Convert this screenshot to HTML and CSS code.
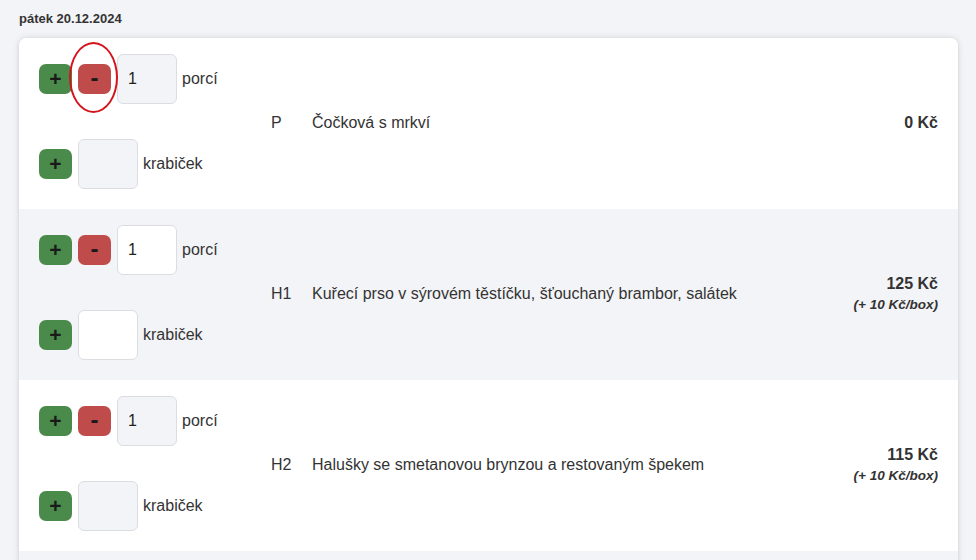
FILE: index.html
```html
<!DOCTYPE html>
<html lang="cs">
<head>
<meta charset="utf-8">
<link rel="stylesheet" href="styles.css">
</head>
<body>
<div class="day">pátek 20.12.2024</div>
<div class="card">
  <div class="row">
    <div class="controls">
      <div class="line">
        <button class="btn plus">+</button>
        <span class="minus-wrap">
          <button class="btn minus">-</button>
          <span class="mark"></span>
        </span>
        <input class="qty" type="text" value="1">
        <span class="unit">porcí</span>
      </div>
      <div class="line">
        <button class="btn plus">+</button>
        <input class="qty" type="text" value="">
        <span class="unit">krabiček</span>
      </div>
    </div>
    <div class="code">P</div>
    <div class="name">Čočková s mrkví</div>
    <div class="price"><div class="amount">0 Kč</div></div>
  </div>
  <div class="row alt">
    <div class="controls">
      <div class="line">
        <button class="btn plus">+</button>
        <button class="btn minus">-</button>
        <input class="qty" type="text" value="1">
        <span class="unit">porcí</span>
      </div>
      <div class="line">
        <button class="btn plus">+</button>
        <input class="qty" type="text" value="">
        <span class="unit">krabiček</span>
      </div>
    </div>
    <div class="code">H1</div>
    <div class="name">Kuřecí prso v sýrovém těstíčku, šťouchaný brambor, salátek</div>
    <div class="price"><div class="amount">125 Kč</div><div class="box">(+ 10 Kč/box)</div></div>
  </div>
  <div class="row">
    <div class="controls">
      <div class="line">
        <button class="btn plus">+</button>
        <button class="btn minus">-</button>
        <input class="qty" type="text" value="1">
        <span class="unit">porcí</span>
      </div>
      <div class="line">
        <button class="btn plus">+</button>
        <input class="qty" type="text" value="">
        <span class="unit">krabiček</span>
      </div>
    </div>
    <div class="code">H2</div>
    <div class="name">Halušky se smetanovou brynzou a restovaným špekem</div>
    <div class="price"><div class="amount">115 Kč</div><div class="box">(+ 10 Kč/box)</div></div>
  </div>
  <div class="row alt filler"></div>
</div>
</body>
</html>
```

FILE: styles.css
```css
html, body {
  margin: 0;
  padding: 0;
}
body {
  background: #f3f4f7;
  font-family: "Liberation Sans", Arial, sans-serif;
  color: #333;
  padding: 0 18px 0 19px;
  height: 560px;
  overflow: hidden;
}
.day {
  font-size: 13px;
  font-weight: bold;
  line-height: 16px;
  padding-top: 11px;
  margin-bottom: 11px;
  color: #333;
}
.card {
  background: #fff;
  border-radius: 8px;
  box-shadow: 0 0 7px rgba(0, 0, 0, 0.13), 0 1px 3px rgba(0, 0, 0, 0.06);
  overflow: hidden;
}
.row {
  display: grid;
  grid-template-columns: 232px 41px 1fr auto;
  align-items: center;
  padding: 16px 20px 20px 20px;
  background: #fff;
}
.row.alt {
  background: #f3f4f7;
}
.row.filler {
  height: 40px;
  padding: 0;
}
.controls {
  display: flex;
  flex-direction: column;
  gap: 35px;
}
.line {
  display: flex;
  align-items: center;
  height: 50px;
}
.btn {
  width: 33px;
  height: 30px;
  border: none;
  border-radius: 7px;
  padding: 0;
  margin: 0 6px 0 0;
  font-family: "Liberation Sans", Arial, sans-serif;
  font-size: 21px;
  font-weight: bold;
  line-height: 30px;
  color: #1a1a1a;
  display: flex;
  align-items: center;
  justify-content: center;
}
.plus {
  background: #4a8a4a;
}
.minus {
  background: #bf4c4a;
  font-size: 24px;
  padding-bottom: 2px;
}
.minus-wrap {
  position: relative;
  display: flex;
}
.mark {
  position: absolute;
  left: -9px;
  top: -22px;
  width: 45px;
  height: 67px;
  border: 2px solid #d4141c;
  border-radius: 50%;
  pointer-events: none;
}
.qty {
  box-sizing: border-box;
  width: 60px;
  height: 50px;
  border: 1px solid #dcdde1;
  border-radius: 6px;
  background: #f3f4f7;
  font-family: "Liberation Sans", Arial, sans-serif;
  font-size: 16px;
  color: #222;
  padding: 0 0 0 10px;
  margin: 0;
  outline: none;
}
.row.alt .qty {
  background: #fff;
}
.unit {
  font-size: 16px;
  margin-left: 5px;
  color: #333;
}
.code, .name {
  font-size: 16px;
  color: #333;
  padding-top: 3px;
}
.price {
  text-align: right;
  font-weight: bold;
  color: #333;
  padding-top: 3px;
}
.amount {
  font-size: 16px;
  line-height: 20px;
}
.box {
  font-size: 13.5px;
  font-style: italic;
  line-height: 18px;
  margin-top: 2px;
}
```
